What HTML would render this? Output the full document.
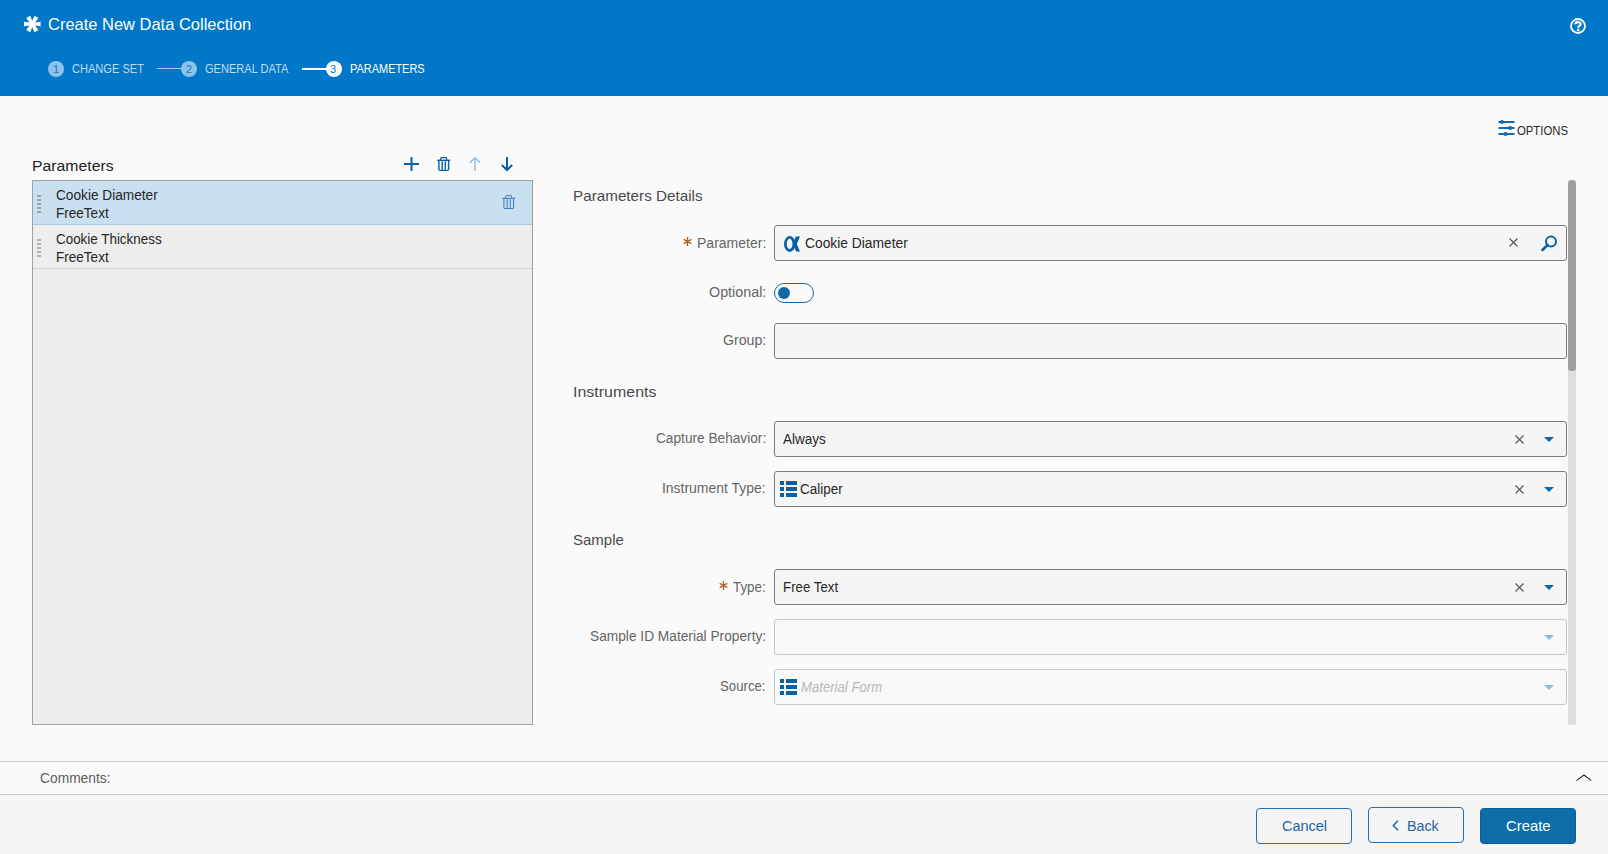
<!DOCTYPE html>
<html><head><meta charset="utf-8"><title>Create New Data Collection</title>
<style>
html,body{margin:0;padding:0;}
body{width:1608px;height:854px;overflow:hidden;position:relative;background:#FAFAFA;font-family:"Liberation Sans", sans-serif;}
.t{position:absolute;white-space:nowrap;line-height:normal;}
.abs{position:absolute;box-sizing:border-box;}
.hdr{position:absolute;left:0;top:0;width:1608px;height:96px;background:#0077C8;}
.inp{position:absolute;left:774px;width:793px;height:36px;box-sizing:border-box;border:1px solid #7A7A7A;border-radius:3px;background:#F5F5F5;}
.inp.dis{border-color:#C6C6C6;background:#F8F8F8;}
.list{position:absolute;left:32px;top:180px;width:501px;height:545px;box-sizing:border-box;border:1px solid #A0A0A0;background:#EDEDED;}
.row{position:absolute;left:0;width:499px;height:44px;box-sizing:border-box;}
.btn{position:absolute;width:96px;height:36px;box-sizing:border-box;border:1.5px solid #1D6FAE;border-radius:4px;background:#F5F5F5;}
svg{position:absolute;overflow:visible;}
</style></head><body>
<div class="hdr"></div>
<svg style="left:24px;top:16px" width="17" height="17" viewBox="0 0 17 17"><g fill="#fff" transform="translate(8.3 8)"><circle r="2"/><polygon points="0,-1.3 8.3,-2.3 8.3,2.3 0,1.3" transform="rotate(0)"/><polygon points="0,-1.3 8.3,-2.3 8.3,2.3 0,1.3" transform="rotate(60)"/><polygon points="0,-1.3 8.3,-2.3 8.3,2.3 0,1.3" transform="rotate(120)"/><polygon points="0,-1.3 8.3,-2.3 8.3,2.3 0,1.3" transform="rotate(180)"/><polygon points="0,-1.3 8.3,-2.3 8.3,2.3 0,1.3" transform="rotate(240)"/><polygon points="0,-1.3 8.3,-2.3 8.3,2.3 0,1.3" transform="rotate(300)"/></g></svg>
<div class="t" style="left:48.00px;top:15px;font-size:16.4px;color:#FFFFFF;transform:scaleX(1.0050);transform-origin:0 0;">Create New Data Collection</div>
<svg style="left:1570px;top:18px" width="16" height="16" viewBox="0 0 16 16"><circle cx="8" cy="8" r="7" fill="none" stroke="#fff" stroke-width="1.8"/><path d="M5.5 6.3 C5.5 3.4 10.6 3.4 10.6 6.2 C10.6 7.9 8.2 8 8.2 9.8" fill="none" stroke="#fff" stroke-width="2.3"/><circle cx="8.2" cy="12.1" r="1.35" fill="#fff"/></svg>
<svg style="left:48px;top:61px" width="16" height="16" viewBox="0 0 16 16"><circle cx="8" cy="8" r="8" fill="#8EC2E8"/></svg>
<div class="t" style="left:53.00px;top:63px;font-size:11px;color:#1F78C0;">1</div>
<div class="t" style="left:72.08px;top:62px;font-size:12.0px;color:#BFDDF2;transform:scaleX(0.9221);transform-origin:0 0;">CHANGE SET</div>
<div class="abs" style="left:157px;top:68px;width:25px;height:1px;background:#9FCBEB"></div>
<svg style="left:181px;top:61px" width="16" height="16" viewBox="0 0 16 16"><circle cx="8" cy="8" r="8" fill="#8EC2E8"/></svg>
<div class="t" style="left:186.00px;top:63px;font-size:11px;color:#1F78C0;">2</div>
<div class="t" style="left:205.08px;top:62px;font-size:12.0px;color:#BFDDF2;transform:scaleX(0.9222);transform-origin:0 0;">GENERAL DATA</div>
<div class="abs" style="left:302px;top:68px;width:25px;height:1.5px;background:#FFFFFF"></div>
<svg style="left:326px;top:61px" width="16" height="16" viewBox="0 0 16 16"><circle cx="8" cy="8" r="8" fill="#FFFFFF"/></svg>
<div class="t" style="left:330.00px;top:63px;font-size:11px;color:#0077C8;">3</div>
<div class="t" style="left:350.09px;top:62px;font-size:12.0px;color:#FFFFFF;transform:scaleX(0.9125);transform-origin:0 0;">PARAMETERS</div>
<svg style="left:1498px;top:119px" width="18" height="18" viewBox="0 0 18 18"><g fill="#146AAA"><rect x="0.5" y="2" width="16" height="2"/><rect x="0.5" y="8" width="16" height="2"/><rect x="0.5" y="14" width="16" height="2"/><circle cx="4" cy="3" r="2.1"/><circle cx="12" cy="9" r="2.1"/><circle cx="7.5" cy="15" r="2.1"/></g></svg>
<div class="t" style="left:1517.00px;top:124px;font-size:12.0px;color:#262626;transform:scaleX(0.9444);transform-origin:0 0;">OPTIONS</div>
<div class="t" style="left:31.97px;top:157px;font-size:15.4px;color:#222222;transform:scaleX(1.0256);transform-origin:0 0;">Parameters</div>
<svg style="left:404px;top:157px" width="15" height="14" viewBox="0 0 15 14"><g fill="#0B5FA5"><rect x="0" y="6" width="15" height="2"/><rect x="6.5" y="0" width="2" height="14"/></g></svg>
<svg style="left:437px;top:157px" width="14" height="14" viewBox="0 0 14 14"><g fill="none" stroke="#0B5FA5" stroke-width="1.4"><path d="M0.2 3.3 H13.2"/><path d="M3.4 3.2 L4.1 0.6 H9.3 L10 3.2" stroke-width="1.19"/><path d="M1.9 3.6 V12.3 Q1.9 13.4 3 13.4 H10.5 Q11.6 13.4 11.6 12.3 V3.6"/><path d="M5.2 4.2 V12.8"/><path d="M8.3 4.2 V12.8"/></g></svg>
<svg style="left:469px;top:157px" width="12" height="14" viewBox="0 0 12 14"><g fill="none" stroke="#7DB8E2" stroke-width="1.3"><path d="M6 0.8 V14"/><path d="M0.8 5.8 L6 0.8 L11.2 5.8"/></g></svg>
<svg style="left:501px;top:157px" width="12" height="14" viewBox="0 0 12 14"><g fill="none" stroke="#0B5FA5" stroke-width="2"><path d="M6 0 V13"/><path d="M0.8 8 L6 13 L11.2 8"/></g></svg>
<div class="list">
<div class="row" style="top:0;background:#C9E0F1;border-bottom:1px solid #A9C6DC"></div>
<div class="row" style="top:44px;border-bottom:1px dotted #B8B8B8"></div>
</div>
<div class="abs" style="left:37px;top:195px;width:4px;height:1.5px;background:#9AA3AA"></div><div class="abs" style="left:37px;top:199px;width:4px;height:1.5px;background:#9AA3AA"></div><div class="abs" style="left:37px;top:203px;width:4px;height:1.5px;background:#9AA3AA"></div><div class="abs" style="left:37px;top:207px;width:4px;height:1.5px;background:#9AA3AA"></div><div class="abs" style="left:37px;top:211px;width:4px;height:1.5px;background:#9AA3AA"></div>
<div class="abs" style="left:37px;top:239px;width:4px;height:2px;background:#B3B3B3"></div><div class="abs" style="left:37px;top:243px;width:4px;height:2px;background:#B3B3B3"></div><div class="abs" style="left:37px;top:247px;width:4px;height:2px;background:#B3B3B3"></div><div class="abs" style="left:37px;top:251px;width:4px;height:2px;background:#B3B3B3"></div><div class="abs" style="left:37px;top:255px;width:4px;height:2px;background:#B3B3B3"></div>
<div class="t" style="left:56.01px;top:188px;font-size:13.8px;color:#262626;transform:scaleX(0.9902);transform-origin:0 0;">Cookie Diameter</div>
<div class="t" style="left:56.02px;top:206px;font-size:13.8px;color:#262626;transform:scaleX(0.9811);transform-origin:0 0;">FreeText</div>
<div class="t" style="left:56.03px;top:232px;font-size:13.8px;color:#262626;transform:scaleX(0.9720);transform-origin:0 0;">Cookie Thickness</div>
<div class="t" style="left:56.02px;top:250px;font-size:13.8px;color:#262626;transform:scaleX(0.9811);transform-origin:0 0;">FreeText</div>
<svg style="left:501.5px;top:195px" width="14" height="14" viewBox="0 0 14 14"><g fill="none" stroke="#3B7CBE" stroke-width="1.05"><path d="M0.2 3.3 H13.2"/><path d="M3.4 3.2 L4.1 0.6 H9.3 L10 3.2" stroke-width="0.89"/><path d="M1.9 3.6 V12.3 Q1.9 13.4 3 13.4 H10.5 Q11.6 13.4 11.6 12.3 V3.6"/><path d="M5.2 4.2 V12.8"/><path d="M8.3 4.2 V12.8"/></g></svg>
<div class="t" style="left:572.98px;top:187px;font-size:15.0px;color:#4A4A4A;transform:scaleX(1.0159);transform-origin:0 0;">Parameters Details</div>
<svg style="left:683.0px;top:236.8px" width="9" height="9" viewBox="0 0 9 9"><g stroke="#AE611F" stroke-width="1.35" stroke-linecap="round"><line x1="4.5" y1="0.6" x2="4.5" y2="8.4"/><line x1="1.2" y1="2.6" x2="7.8" y2="6.4"/><line x1="7.8" y1="2.6" x2="1.2" y2="6.4"/></g></svg>
<div class="t" style="left:696.98px;top:236px;font-size:13.8px;color:#656565;transform:scaleX(1.0152);transform-origin:0 0;">Parameter:</div>
<div class="inp" style="top:225px"></div>
<svg style="left:783.5px;top:236px" width="17" height="16" viewBox="0 0 17 16"><g fill="#0B5FA5"><path fill-rule="evenodd" d="M0 8 A5.7 7.9 0 1 0 11.4 8 A5.7 7.9 0 1 0 0 8 Z M2.7 7.85 A2.9 5.25 0 1 0 8.5 7.85 A2.9 5.25 0 1 0 2.7 7.85 Z"/><polygon points="12,0.6 16,0.6 12.8,8 16,15.6 12.2,15.6 9.2,9.8 9.2,6.2"/></g></svg>
<div class="t" style="left:805.00px;top:236px;font-size:13.8px;color:#262626;">Cookie Diameter</div>
<svg style="left:1508.5px;top:238.0px" width="9" height="9" viewBox="0 0 9 9"><g stroke="#5E5E5E" stroke-width="1.25"><line x1="0.5" y1="0.5" x2="8.5" y2="8.5"/><line x1="8.5" y1="0.5" x2="0.5" y2="8.5"/></g></svg>
<svg style="left:1541px;top:234.5px" width="17" height="17" viewBox="0 0 17 17"><circle cx="10" cy="6.5" r="5" fill="none" stroke="#0B63A8" stroke-width="2"/><line x1="1.5" y1="15" x2="6.6" y2="10" stroke="#0B63A8" stroke-width="2.6" stroke-linecap="round"/></svg>
<div class="t" style="left:708.96px;top:285px;font-size:13.8px;color:#656565;transform:scaleX(1.0377);transform-origin:0 0;">Optional:</div>
<div class="abs" style="left:774px;top:283px;width:40px;height:20px;border:1.5px solid #106AA8;border-radius:10px;background:#FAFAFA"></div>
<div class="abs" style="left:778px;top:287px;width:12px;height:12px;border-radius:6px;background:#106AA8"></div>
<div class="t" style="left:722.98px;top:333px;font-size:13.8px;color:#656565;transform:scaleX(1.0250);transform-origin:0 0;">Group:</div>
<div class="inp" style="top:323px"></div>
<div class="t" style="left:572.94px;top:383px;font-size:15.0px;color:#4A4A4A;transform:scaleX(1.0649);transform-origin:0 0;">Instruments</div>
<div class="t" style="left:656.01px;top:431px;font-size:13.8px;color:#656565;transform:scaleX(0.9908);transform-origin:0 0;">Capture Behavior:</div>
<div class="inp" style="top:421px"></div>
<div class="t" style="left:783.00px;top:432px;font-size:13.8px;color:#262626;transform:scaleX(0.9767);transform-origin:0 0;">Always</div>
<svg style="left:1515.0px;top:435.0px" width="9" height="9" viewBox="0 0 9 9"><g stroke="#5E5E5E" stroke-width="1.25"><line x1="0.5" y1="0.5" x2="8.5" y2="8.5"/><line x1="8.5" y1="0.5" x2="0.5" y2="8.5"/></g></svg>
<svg style="left:1544px;top:437px" width="10" height="5" viewBox="0 0 10 5"><path d="M0 0 H10 L5 5 Z" fill="#0B6AB0"/></svg>
<div class="t" style="left:661.99px;top:481px;font-size:13.8px;color:#656565;transform:scaleX(1.0099);transform-origin:0 0;">Instrument Type:</div>
<div class="inp" style="top:471px"></div>
<svg style="left:780px;top:481px" width="17" height="16" viewBox="0 0 17 16"><g fill="#0B5FA5"><rect x="0" y="0" width="4" height="4"/><rect x="6" y="0" width="11" height="4"/><rect x="0" y="6" width="4" height="4"/><rect x="6" y="6" width="11" height="4"/><rect x="0" y="12" width="4" height="4"/><rect x="6" y="12" width="11" height="4"/></g></svg>
<div class="t" style="left:800.02px;top:482px;font-size:13.8px;color:#262626;transform:scaleX(0.9767);transform-origin:0 0;">Caliper</div>
<svg style="left:1515.0px;top:485.0px" width="9" height="9" viewBox="0 0 9 9"><g stroke="#5E5E5E" stroke-width="1.25"><line x1="0.5" y1="0.5" x2="8.5" y2="8.5"/><line x1="8.5" y1="0.5" x2="0.5" y2="8.5"/></g></svg>
<svg style="left:1544px;top:487px" width="10" height="5" viewBox="0 0 10 5"><path d="M0 0 H10 L5 5 Z" fill="#0B6AB0"/></svg>
<div class="t" style="left:573.00px;top:531px;font-size:15.0px;color:#4A4A4A;">Sample</div>
<svg style="left:718.8px;top:581.1px" width="9" height="9" viewBox="0 0 9 9"><g stroke="#AE611F" stroke-width="1.35" stroke-linecap="round"><line x1="4.5" y1="0.6" x2="4.5" y2="8.4"/><line x1="1.2" y1="2.6" x2="7.8" y2="6.4"/><line x1="7.8" y1="2.6" x2="1.2" y2="6.4"/></g></svg>
<div class="t" style="left:733.00px;top:580px;font-size:13.8px;color:#656565;transform:scaleX(0.9697);transform-origin:0 0;">Type:</div>
<div class="inp" style="top:569px"></div>
<div class="t" style="left:783.04px;top:580px;font-size:13.8px;color:#262626;transform:scaleX(0.9643);transform-origin:0 0;">Free Text</div>
<svg style="left:1515.0px;top:583.0px" width="9" height="9" viewBox="0 0 9 9"><g stroke="#5E5E5E" stroke-width="1.25"><line x1="0.5" y1="0.5" x2="8.5" y2="8.5"/><line x1="8.5" y1="0.5" x2="0.5" y2="8.5"/></g></svg>
<svg style="left:1544px;top:585px" width="10" height="5" viewBox="0 0 10 5"><path d="M0 0 H10 L5 5 Z" fill="#0B6AB0"/></svg>
<div class="t" style="left:590.01px;top:629px;font-size:13.8px;color:#656565;transform:scaleX(0.9943);transform-origin:0 0;">Sample ID Material Property:</div>
<div class="inp dis" style="top:619px"></div>
<svg style="left:1544px;top:635px" width="10" height="5" viewBox="0 0 10 5"><path d="M0 0 H10 L5 5 Z" fill="#8CBDE3"/></svg>
<div class="t" style="left:720.04px;top:679px;font-size:13.8px;color:#656565;transform:scaleX(0.9565);transform-origin:0 0;">Source:</div>
<div class="inp dis" style="top:669px"></div>
<svg style="left:780px;top:679px" width="17" height="16" viewBox="0 0 17 16"><g fill="#0B5FA5"><rect x="0" y="0" width="4" height="4"/><rect x="6" y="0" width="11" height="4"/><rect x="0" y="6" width="4" height="4"/><rect x="6" y="6" width="11" height="4"/><rect x="0" y="12" width="4" height="4"/><rect x="6" y="12" width="11" height="4"/></g></svg>
<div class="t" style="left:801.00px;top:680px;font-size:13.8px;color:#B8B8B8;transform:scaleX(0.9529);transform-origin:0 0;font-style:italic;">Material Form</div>
<svg style="left:1544px;top:685px" width="10" height="5" viewBox="0 0 10 5"><path d="M0 0 H10 L5 5 Z" fill="#8CBDE3"/></svg>
<div class="abs" style="left:1568px;top:180px;width:8px;height:545px;background:#DEDEDE"></div>
<div class="abs" style="left:1568px;top:180px;width:8px;height:191px;background:#9F9F9F;border-radius:4px 4px 3px 3px"></div>
<div class="abs" style="left:0;top:761px;width:1608px;height:34px;border-top:1px solid #C8C8C8;border-bottom:1px solid #C8C8C8;background:#FAFAFA"></div>
<div class="t" style="left:40.00px;top:771px;font-size:13.8px;color:#5C5C5C;">Comments:</div>
<svg style="left:1576px;top:773px" width="16" height="9" viewBox="0 0 16 9"><path d="M0.5 7.6 L8 2 L15.3 7.6" fill="none" stroke="#2A2A2A" stroke-width="1.15"/></svg>
<div class="abs" style="left:0;top:795px;width:1608px;height:59px;background:#F5F5F5"></div>
<div class="btn" style="left:1256px;top:808px"></div>
<div class="t" style="left:1281.95px;top:819px;font-size:13.8px;color:#1D64A0;transform:scaleX(1.0488);transform-origin:0 0;">Cancel</div>
<div class="btn" style="left:1368px;top:807px"></div>
<svg style="left:1392px;top:820px" width="7" height="11" viewBox="0 0 7 11"><path d="M6 0.7 L1.3 5.5 L6 10.3" fill="none" stroke="#1D64A0" stroke-width="1.5"/></svg>
<div class="t" style="left:1406.97px;top:819px;font-size:13.8px;color:#1D64A0;transform:scaleX(1.0333);transform-origin:0 0;">Back</div>
<div class="btn" style="left:1480px;top:808px;background:#0F6DA8;border:1px solid #0A5C9C"></div>
<div class="t" style="left:1505.92px;top:819px;font-size:13.8px;color:#FFFFFF;transform:scaleX(1.0750);transform-origin:0 0;">Create</div>
</body></html>
